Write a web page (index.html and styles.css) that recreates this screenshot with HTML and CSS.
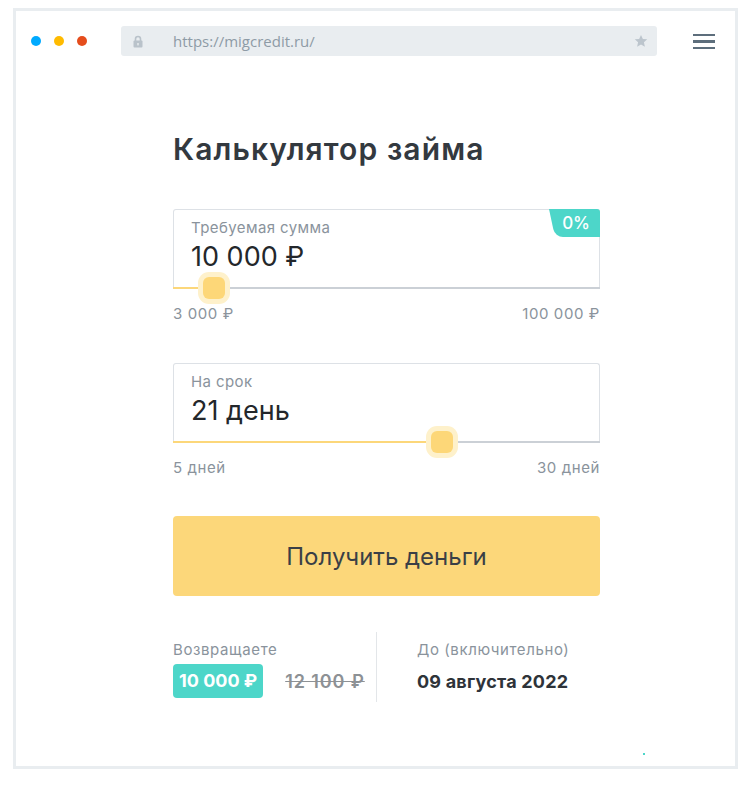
FILE: index.html
```html
<!DOCTYPE html>
<html lang="ru">
<head>
    <meta charset="UTF-8">
    <meta name="viewport" content="width=device-width, initial-scale=1.0">
    <title>Калькулятор займа</title>
    <link rel="stylesheet" href="styles.css">
</head>
<body>
    <div class="window">
        <div class="toolbar">
            <div class="dots">
                <span class="dot blue"></span>
                <span class="dot yellow"></span>
                <span class="dot red"></span>
            </div>
            <div class="url-bar">
                <svg class="lock" width="10" height="13" viewBox="0 0 10 13">
                    <path d="M2.5 6V4a2.5 2.5 0 0 1 5 0v2" fill="none" stroke="#b9c2ca" stroke-width="1.6"/>
                    <rect x="0.5" y="5.5" width="9" height="7" rx="1" fill="#b9c2ca"/>
                    <rect x="4.3" y="8" width="1.4" height="2.4" fill="#e9edf0"/>
                </svg>
                <span class="url">https://migcredit.ru/</span>
                <svg class="star" width="14" height="14" viewBox="0 0 24 24">
                    <path d="M12 1.5l3.2 7 7.5.7-5.7 5 1.7 7.5L12 17.8l-6.7 3.9 1.7-7.5-5.7-5 7.5-.7z" fill="#bcc5cd"/>
                </svg>
            </div>
            <div class="menu">
                <span></span><span></span><span></span>
            </div>
        </div>

        <main class="calc">
            <h1>Калькулятор займа</h1>

            <div class="field">
                <div class="field-box">
                    <div class="field-label">Требуемая сумма</div>
                    <div class="field-value">10 000 ₽</div>
                    <div class="rate">0%</div>
                </div>
                <div class="track">
                    <div class="fill" style="width: 41px"></div>
                    <div class="thumb" style="left: 41px"></div>
                </div>
            </div>
            <div class="range">
                <span>3 000 ₽</span>
                <span>100 000 ₽</span>
            </div>

            <div class="field second">
                <div class="field-box">
                    <div class="field-label">На срок</div>
                    <div class="field-value">21 день</div>
                </div>
                <div class="track">
                    <div class="fill" style="width: 269px"></div>
                    <div class="thumb" style="left: 269px"></div>
                </div>
            </div>
            <div class="range">
                <span>5 дней</span>
                <span>30 дней</span>
            </div>

            <button class="cta">Получить деньги</button>

            <div class="summary">
                <div class="sum-col pay">
                    <div class="sum-label">Возвращаете</div>
                    <div class="sum-line">
                        <span class="amount">10 000 ₽</span>
                        <span class="old">12 100 ₽</span>
                    </div>
                </div>
                <div class="sum-col until">
                    <div class="sum-label">До (включительно)</div>
                    <div class="sum-line">
                        <span class="date">09 августа 2022</span>
                    </div>
                </div>
            </div>
        </main>

        <span class="spark"></span>
    </div>
</body>
</html>
```

FILE: styles.css
```css
body {
    margin: 0;
    background: #fff;
    font-family: Inter, "Noto Sans", sans-serif;
    color: #23272b;
}
.window {
    position: relative;
    box-sizing: border-box;
    width: 725px;
    height: 761px;
    margin: 8px 0 0 13px;
    border: 3px solid #e9edf0;
}
.toolbar {
    display: flex;
    align-items: center;
    height: 60px;
    padding: 0 20px 0 15px;
}
.dots {
    display: flex;
    gap: 13px;
}
.dot {
    width: 10px;
    height: 10px;
    border-radius: 50%;
}
.dot.blue { background: #00aaff; }
.dot.yellow { background: #ffbb00; }
.dot.red { background: #e54d1c; }
.url-bar {
    display: flex;
    align-items: center;
    width: 536px;
    height: 30px;
    margin-left: 34px;
    padding: 0 9px 0 12px;
    box-sizing: border-box;
    background: #e9edf0;
    border-radius: 3px;
}
.lock {
    margin-right: 30px;
}
.url {
    flex: 1;
    font-family: "Open Sans", sans-serif;
    font-size: 15px;
    color: #8e9ba6;
}
.menu {
    display: flex;
    flex-direction: column;
    gap: 4px;
    margin-left: 36px;
    padding-top: 1px;
}
.menu span {
    width: 22px;
    height: 2.5px;
    background: #5d6e7c;
}
.calc {
    width: 427px;
    margin: 60px 0 0 157px;
}
h1 {
    margin: 0;
    font-size: 30px;
    line-height: 36px;
    font-weight: 600;
    letter-spacing: 1.1px;
    color: #33393f;
}
.field {
    margin-top: 42px;
}
.field.second {
    margin-top: 40px;
}
.field-box {
    position: relative;
    box-sizing: border-box;
    height: 78px;
    padding: 9px 17px 0;
    border: 1px solid #dde1e6;
    border-bottom: none;
    border-radius: 3px 3px 0 0;
}
.field-label {
    font-size: 15px;
    line-height: 18px;
    letter-spacing: 0.4px;
    color: #8a939c;
}
.field-value {
    margin-top: 4px;
    font-size: 27px;
    line-height: 32px;
    color: #23272b;
}
.rate {
    position: absolute;
    top: -1px;
    right: -1px;
    z-index: 1;
    overflow: hidden;
    height: 28px;
    padding: 0 10px 0 13px;
    border-radius: 0 3px 0 0;
    font-size: 17px;
    line-height: 28px;
    font-weight: 500;
    color: #fff;
}
.rate::before {
    content: '';
    position: absolute;
    top: 0;
    bottom: 0;
    left: 0;
    right: -12px;
    z-index: -1;
    background: #4dd6c9;
    border-radius: 0 0 0 8px;
    transform: skewX(12deg);
    transform-origin: top;
}
.track {
    position: relative;
    height: 2px;
    background: #cbd0d6;
}
.fill {
    height: 2px;
    background: #fcd77a;
}
.thumb {
    position: absolute;
    top: -10px;
    width: 22px;
    height: 22px;
    margin-left: -11px;
    background: #fdd778;
    border-radius: 6px;
    box-shadow: 0 0 0 5px #fef1cb;
}
.range {
    display: flex;
    justify-content: space-between;
    margin-top: 16px;
    font-size: 15px;
    line-height: 18px;
    letter-spacing: 0.6px;
    color: #8a939c;
}
.cta {
    display: block;
    width: 100%;
    height: 80px;
    margin-top: 39px;
    border: none;
    border-radius: 4px;
    background: #fcd77a;
    font-family: Inter, sans-serif;
    font-size: 24px;
    color: #3a3f46;
    cursor: pointer;
}
.summary {
    display: flex;
    margin-top: 36px;
}
.sum-col {
    padding: 9px 0 4px;
}
.sum-col.pay {
    width: 203px;
}
.sum-col.until {
    padding-left: 40px;
    border-left: 1px solid #e3e6e9;
}
.sum-label {
    font-size: 15px;
    line-height: 18px;
    letter-spacing: 0.6px;
    color: #8a939c;
}
.sum-line {
    display: flex;
    align-items: center;
    height: 34px;
    margin-top: 5px;
}
.amount {
    padding: 0 6px;
    border-radius: 4px;
    background: #4dd6c9;
    font-size: 18px;
    line-height: 34px;
    font-weight: 700;
    color: #fff;
}
.old {
    margin-left: 22px;
    font-size: 18px;
    font-weight: 600;
    letter-spacing: 0.9px;
    color: #8d9195;
    text-decoration: line-through;
}
.date {
    font-size: 18px;
    font-weight: 700;
    letter-spacing: 0.2px;
    color: #2e3339;
}
.spark {
    position: absolute;
    left: 627px;
    top: 742px;
    width: 2px;
    height: 2px;
    background: #4dd6c9;
}
```
